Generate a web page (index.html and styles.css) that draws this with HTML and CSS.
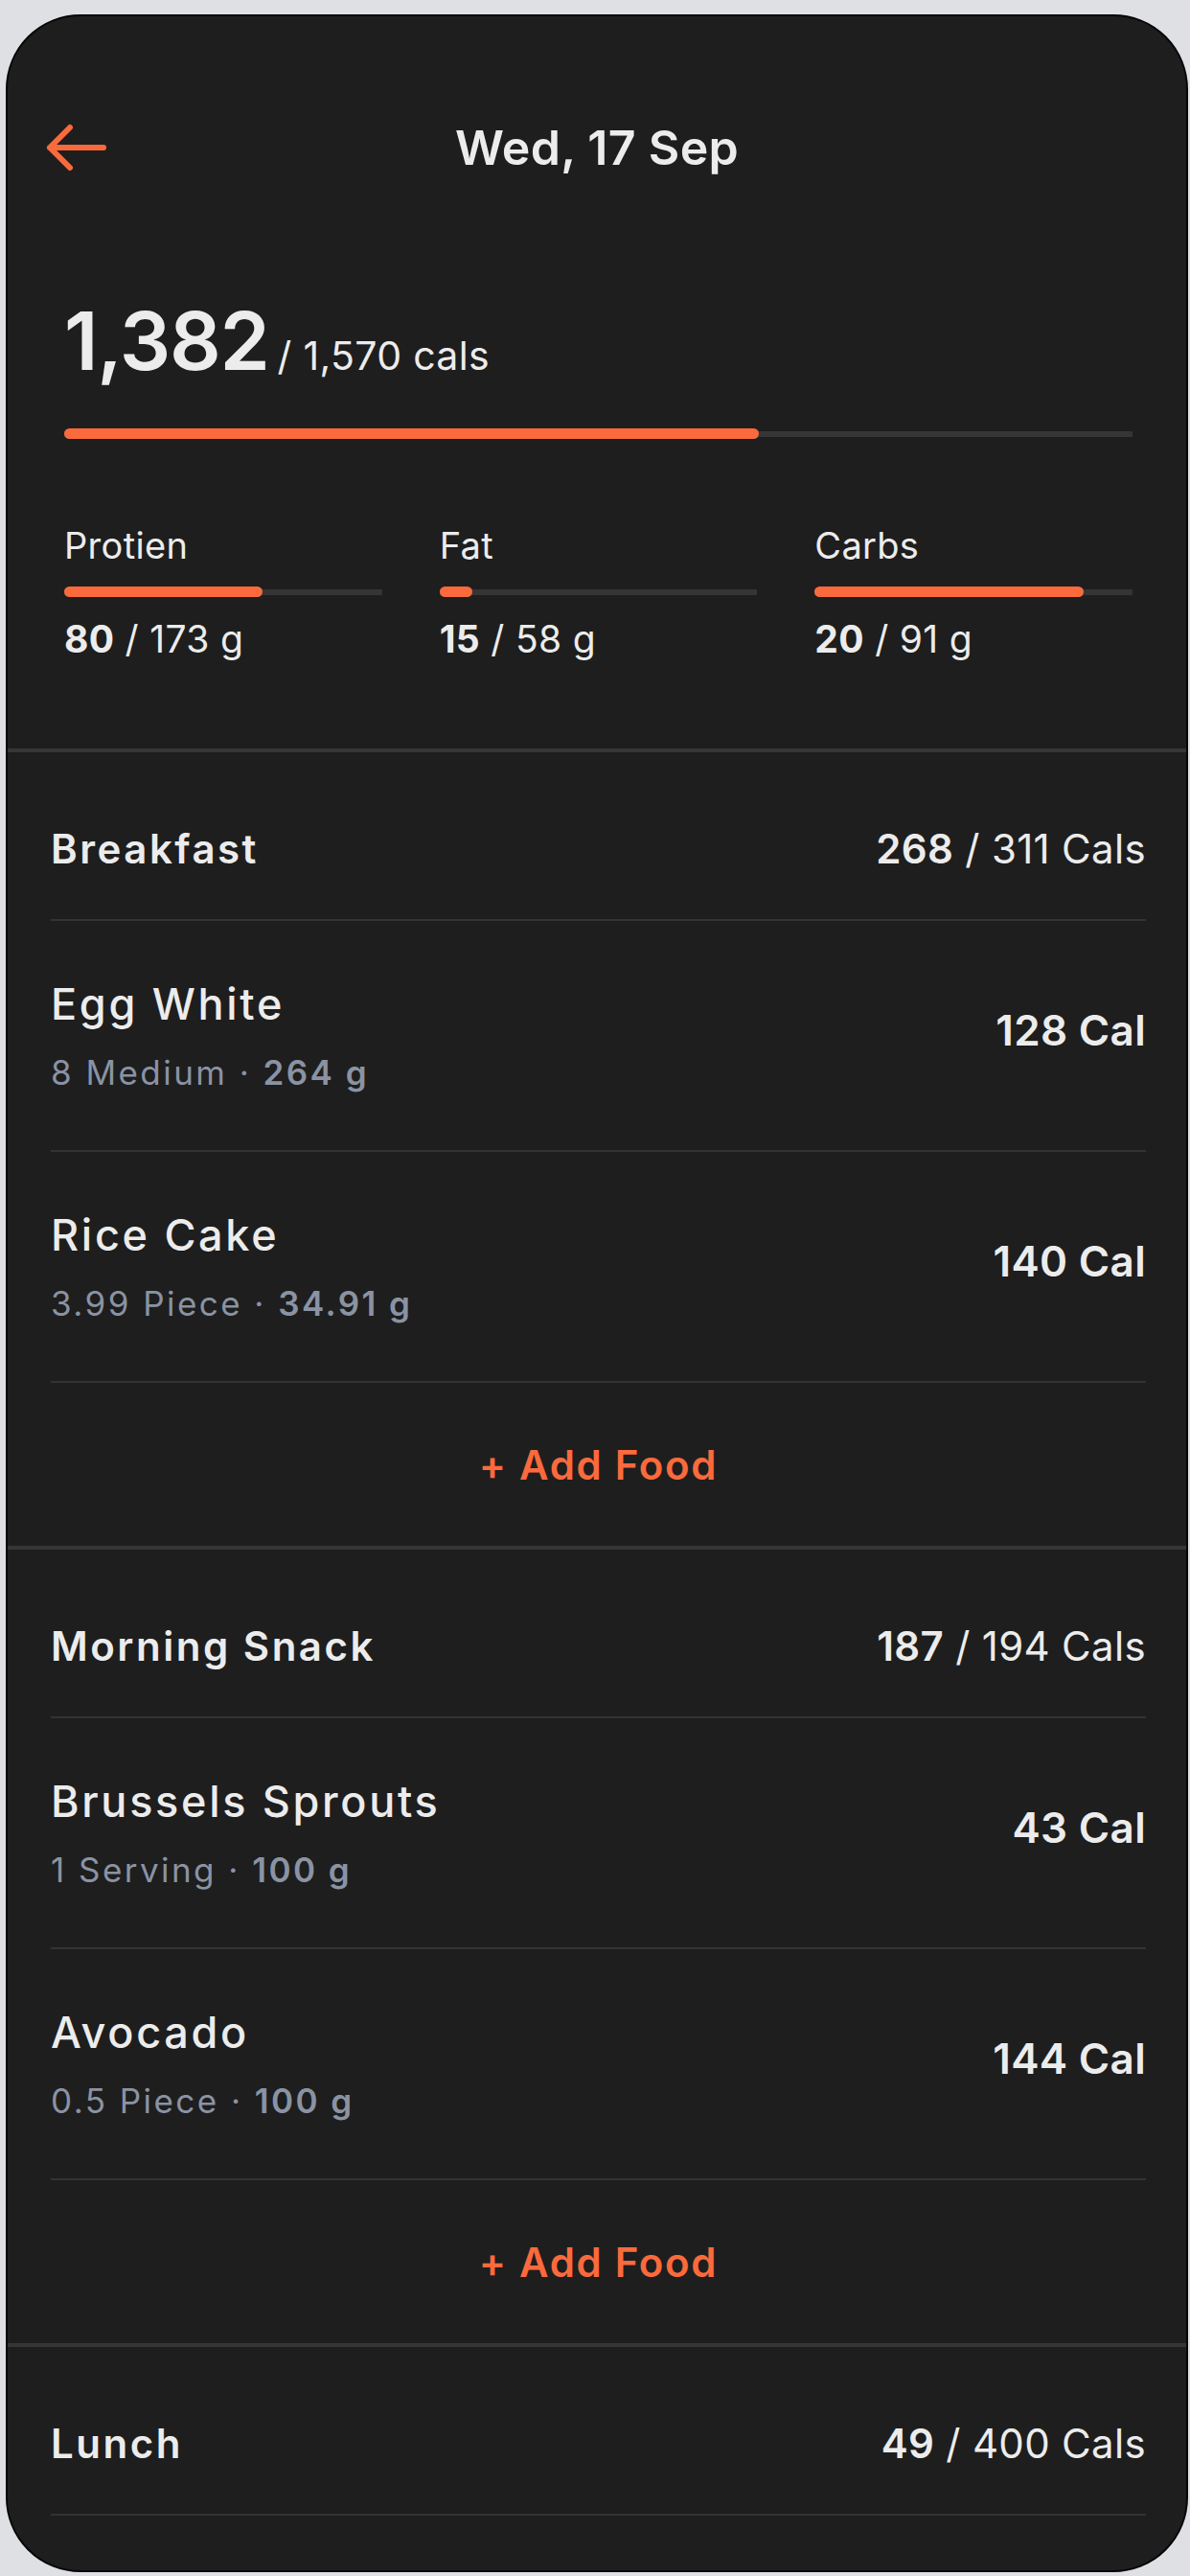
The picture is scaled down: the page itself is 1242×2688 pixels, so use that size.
FILE: index.html
```html
<!DOCTYPE html>
<html lang="en">
<head>
<meta charset="utf-8">
<title>Wed, 17 Sep</title>
<link rel="stylesheet" href="styles.css">
</head>
<body>
<div class="phone">
  <header class="topbar">
    <svg class="back" width="64" height="50" viewBox="0 0 64 50" aria-label="Back">
      <path d="M4 25 H60 M4 25 L25 4 M4 25 L25 46" fill="none" stroke="#fb6a3c" stroke-width="6" stroke-linecap="round" stroke-linejoin="round"/>
    </svg>
    <h1 class="title">Wed, 17 Sep</h1>
    <span class="spacer"></span>
  </header>

  <section class="summary">
    <div class="total"><span class="total-num">1,382</span><span class="total-goal">/ 1,570 cals</span></div>
    <div class="bar bar-main"><div class="fill" style="width:65%"></div></div>
    <div class="macros">
      <div class="macro">
        <div class="macro-label">Protien</div>
        <div class="bar"><div class="fill" style="width:62.5%"></div></div>
        <div class="macro-val"><b>80</b> / 173 g</div>
      </div>
      <div class="macro">
        <div class="macro-label">Fat</div>
        <div class="bar"><div class="fill" style="width:10.5%"></div></div>
        <div class="macro-val"><b>15</b> / 58 g</div>
      </div>
      <div class="macro">
        <div class="macro-label">Carbs</div>
        <div class="bar"><div class="fill" style="width:84.5%"></div></div>
        <div class="macro-val"><b>20</b> / 91 g</div>
      </div>
    </div>
  </section>

  <section class="meal">
    <div class="meal-head"><span class="meal-name">Breakfast</span><span class="meal-cals"><b>268</b> / 311 Cals</span></div>
    <div class="food">
      <div class="food-info"><div class="food-name">Egg White</div><div class="food-sub">8 Medium · <b>264 g</b></div></div>
      <div class="food-cal">128 Cal</div>
    </div>
    <div class="food">
      <div class="food-info"><div class="food-name">Rice Cake</div><div class="food-sub">3.99 Piece · <b>34.91 g</b></div></div>
      <div class="food-cal">140 Cal</div>
    </div>
    <div class="add">+ Add Food</div>
  </section>

  <section class="meal">
    <div class="meal-head"><span class="meal-name">Morning Snack</span><span class="meal-cals"><b>187</b> / 194 Cals</span></div>
    <div class="food">
      <div class="food-info"><div class="food-name">Brussels Sprouts</div><div class="food-sub">1 Serving · <b>100 g</b></div></div>
      <div class="food-cal">43 Cal</div>
    </div>
    <div class="food">
      <div class="food-info"><div class="food-name">Avocado</div><div class="food-sub">0.5 Piece · <b>100 g</b></div></div>
      <div class="food-cal">144 Cal</div>
    </div>
    <div class="add">+ Add Food</div>
  </section>

  <section class="meal">
    <div class="meal-head"><span class="meal-name">Lunch</span><span class="meal-cals"><b>49</b> / 400 Cals</span></div>
  </section>
</div>
</body>
</html>
```

FILE: styles.css
```css
html, body {
  margin: 0;
  padding: 0;
}

body {
  background: #dfe0e4;
  padding-top: 15px;
  padding-left: 6px;
}

.phone {
  box-sizing: border-box;
  width: 1234px;
  height: 2669px;
  border: 2px solid #060606;
  border-radius: 78px;
  background: #1e1e1e;
  overflow: hidden;
  font-family: Inter, "Noto Sans", sans-serif;
  color: #ececec;
  letter-spacing: 0.02em;
}

/* header */
.topbar {
  display: grid;
  grid-template-columns: 120px 1fr 120px;
  align-items: center;
  height: 100px;
  margin-top: 87px;
  padding: 0 40px;
}

.back {
  display: block;
}

.title {
  margin: 0;
  text-align: center;
  font-size: 50px;
  font-weight: 600;
  line-height: 60px;
  color: #ececec;
}

/* summary */
.summary {
  padding: 102px 56px 90px 59px;
}

.total {
  display: flex;
  align-items: baseline;
  height: 100px;
  line-height: 100px;
}

.total-num {
  font-size: 84px;
  font-weight: 600;
  letter-spacing: -0.015em;
}

.total-goal {
  font-size: 41px;
  font-weight: 400;
  margin-left: 9px;
}

.bar {
  height: 11px;
  background: linear-gradient(#353535, #353535) center / 100% 6px no-repeat;
}

.bar .fill {
  height: 11px;
  border-radius: 6px;
  background: #fb6a3c;
}

.bar-main {
  margin-top: 41px;
}

.macros {
  display: grid;
  grid-template-columns: repeat(3, 1fr);
  column-gap: 60px;
  margin-top: 88px;
}

.macro-label {
  font-size: 38px;
  line-height: 46px;
  font-weight: 400;
}

.macro .bar {
  margin-top: 20px;
}

.macro-val {
  margin-top: 20px;
  font-size: 39px;
  line-height: 48px;
  font-weight: 400;
}

.macro-val b {
  font-weight: 700;
}

/* meals */
.meal {
  border-top: 4px solid #363636;
  padding: 0 42px 0 45px;
}

.meal-head {
  box-sizing: border-box;
  height: 176px;
  padding-top: 27px;
  display: flex;
  justify-content: space-between;
  align-items: center;
  border-bottom: 2px solid #333333;
  font-size: 42px;
  line-height: 52px;
}

.meal-name {
  font-weight: 600;
  letter-spacing: 0.06em;
}

.meal-cals {
  font-weight: 400;
}

.meal-cals b {
  font-weight: 600;
}

.food {
  box-sizing: border-box;
  height: 241px;
  display: flex;
  justify-content: space-between;
  align-items: center;
  border-bottom: 2px solid #333333;
}

.food-name {
  font-size: 45px;
  line-height: 54px;
  font-weight: 500;
  letter-spacing: 0.06em;
}

.food-sub {
  margin-top: 22px;
  font-size: 35px;
  line-height: 44px;
  color: #8a93a3;
  font-weight: 400;
  letter-spacing: 0.07em;
}

.food-sub b {
  font-weight: 600;
}

.food-cal {
  font-size: 44px;
  line-height: 54px;
  font-weight: 600;
  margin-bottom: 12px;
}

.add {
  height: 170px;
  display: flex;
  align-items: center;
  justify-content: center;
  color: #fb6a3c;
  font-size: 42px;
  font-weight: 600;
  letter-spacing: 0.04em;
}
```
